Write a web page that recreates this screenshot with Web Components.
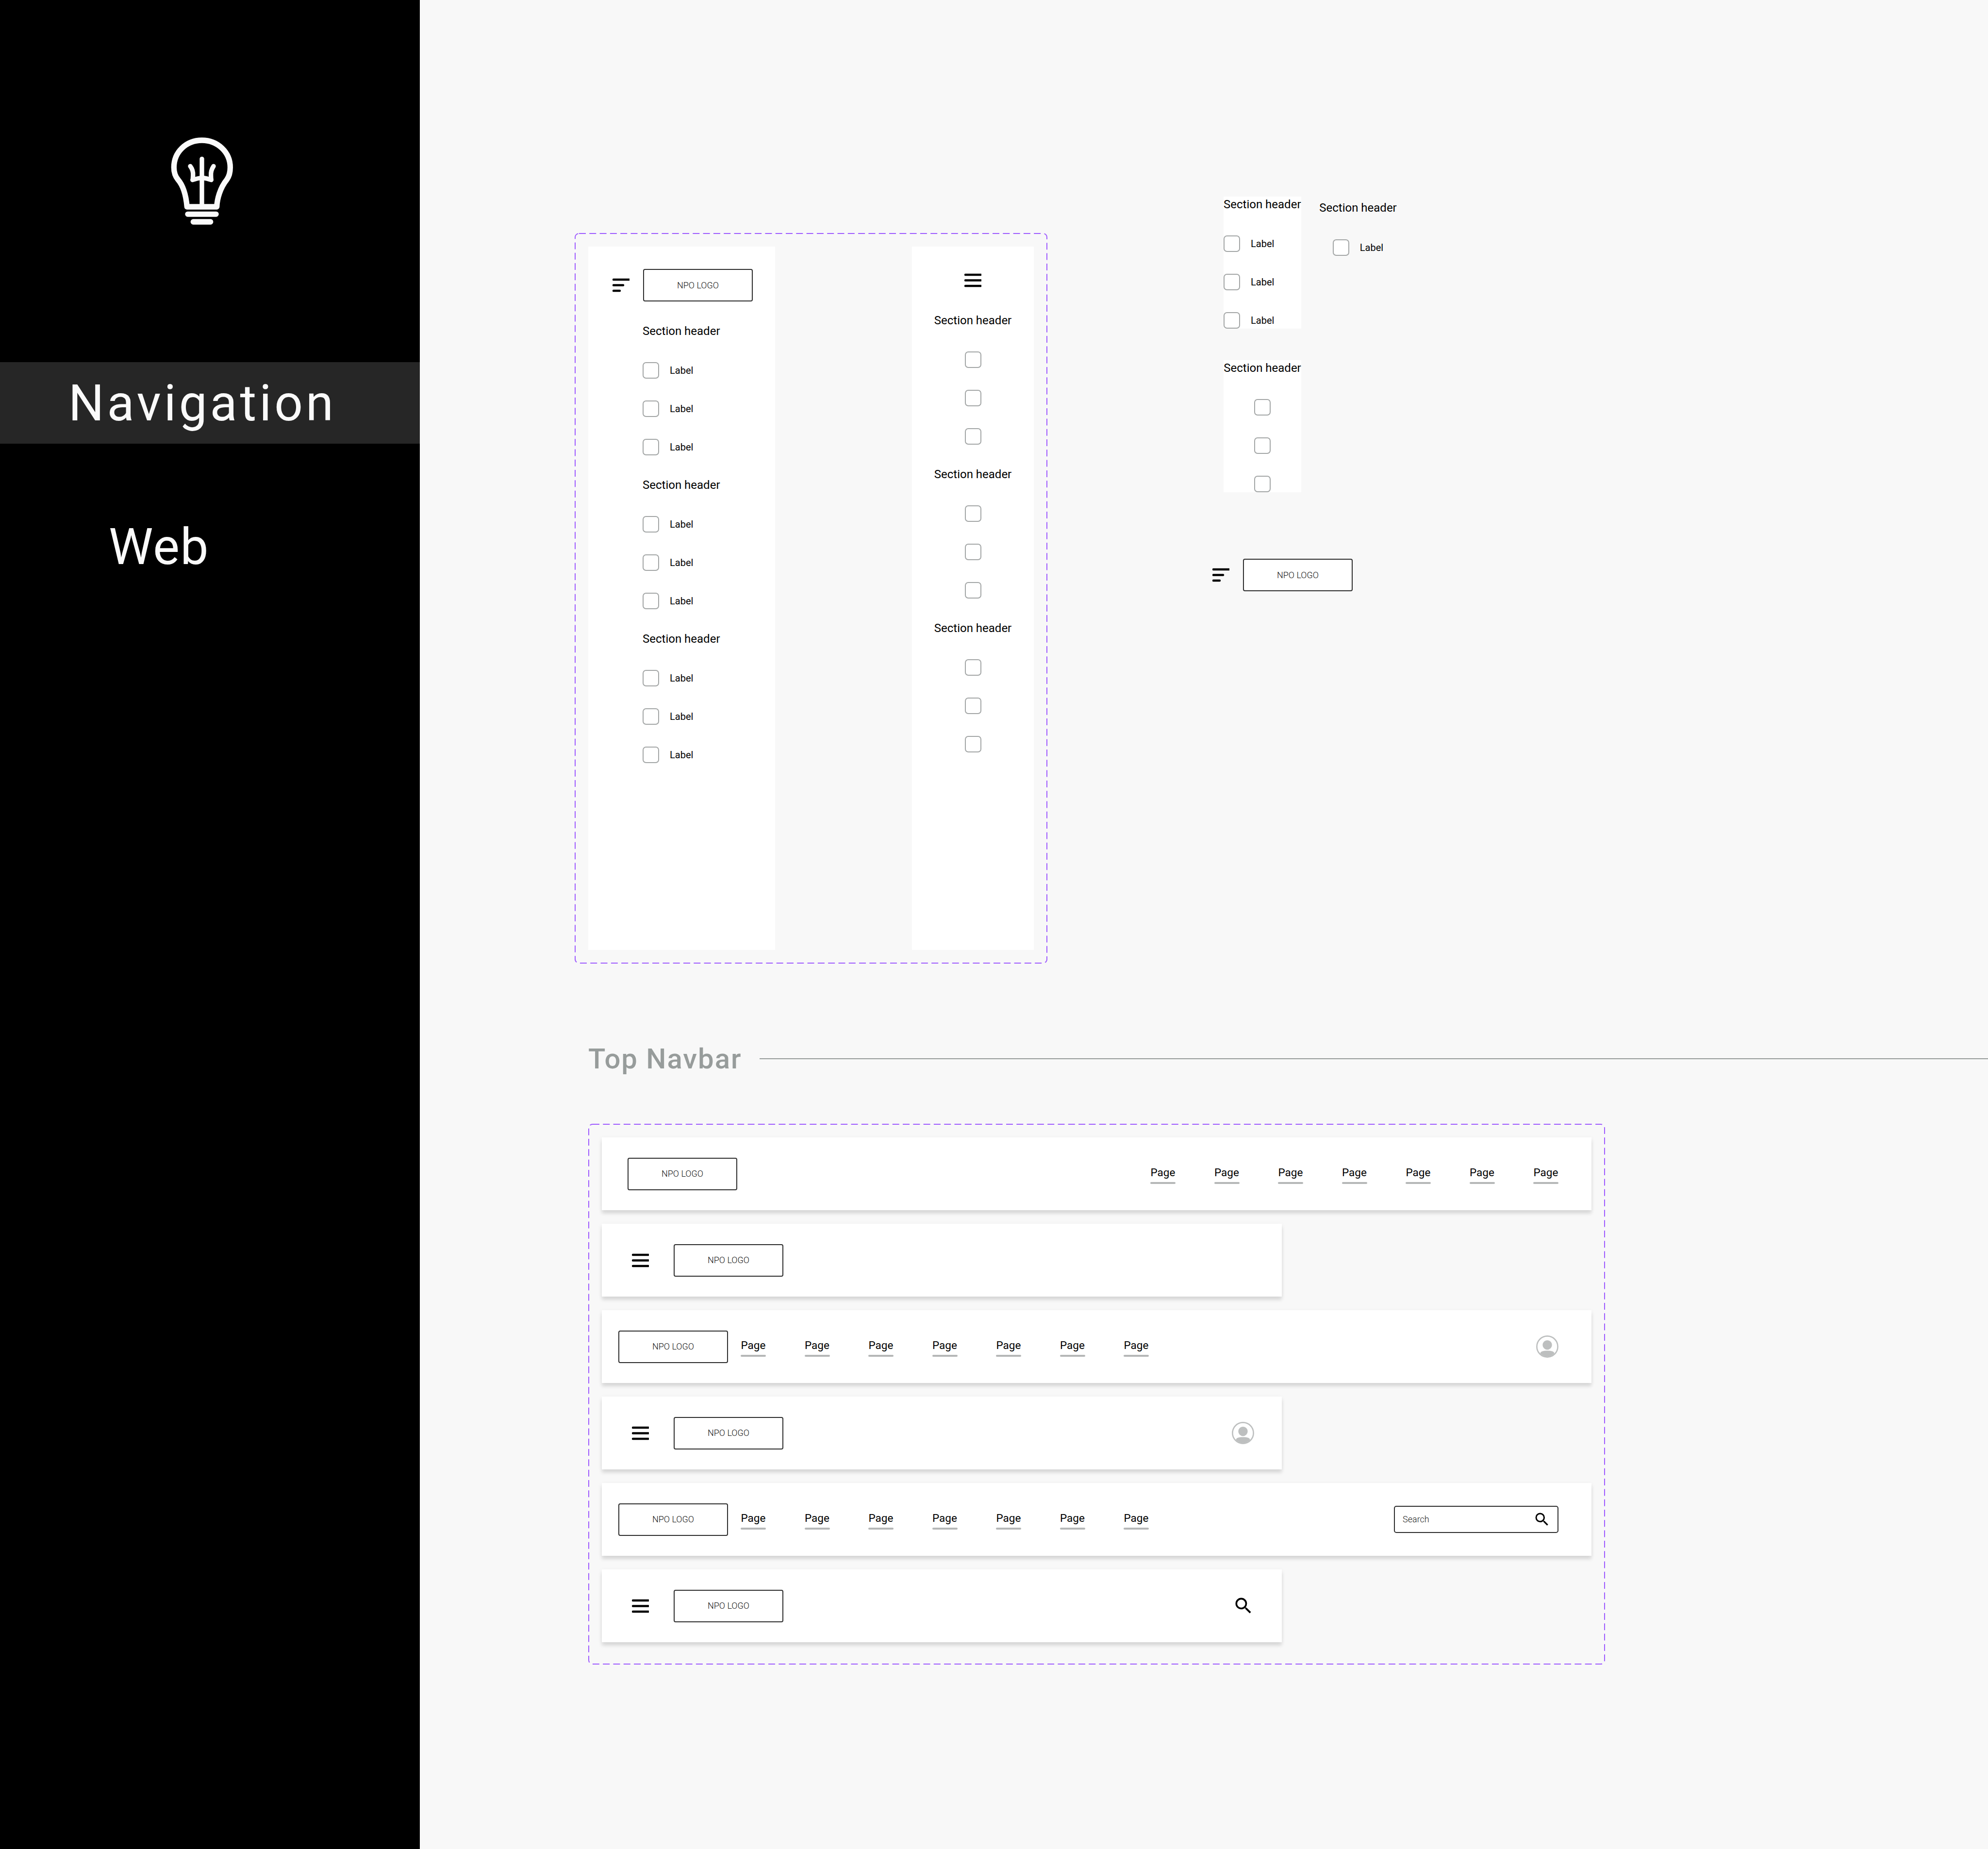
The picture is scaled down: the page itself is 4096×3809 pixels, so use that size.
<!DOCTYPE html>
<html lang="en">
<head>
<meta charset="utf-8">
<title>Navigation</title>
<style>
    html, body { margin: 0; padding: 0; }
    body {
        width: 4096px;
        height: 3809px;
        overflow: hidden;
        display: flex;
        background: #f8f8f8;
        font-family: Roboto, "Liberation Sans", sans-serif;
    }
</style>
</head>
<body>
<app-rail title-text="Navigation" sub-text="Web"></app-rail>
<board-area>
    <div slot="upper">
        <dash-frame style="width:974px;height:1505px;margin-top:75px">
            <div style="display:flex;justify-content:space-between;height:100%">
                <side-panel wide></side-panel>
                <side-panel></side-panel>
            </div>
        </dash-frame>
    </div>
    <loose-parts slot="parts"></loose-parts>
    <section-title slot="title">Top Navbar</section-title>
    <dash-frame slot="navbars" style="width:2095px;height:1114px">
        <div style="display:flex;flex-direction:column;align-items:flex-start;gap:28px">
            <top-bar pad="53">
                <npo-logo slot="start"></npo-logo>
                <page-links slot="end"></page-links>
            </top-bar>
            <top-bar half>
                <menu-icon slot="start" kind="bars"></menu-icon>
                <npo-logo slot="start"></npo-logo>
            </top-bar>
            <top-bar pad="34">
                <npo-logo slot="start"></npo-logo>
                <page-links slot="start"></page-links>
                <user-avatar slot="end"></user-avatar>
            </top-bar>
            <top-bar half>
                <menu-icon slot="start" kind="bars"></menu-icon>
                <npo-logo slot="start"></npo-logo>
                <user-avatar slot="end"></user-avatar>
            </top-bar>
            <top-bar pad="34">
                <npo-logo slot="start"></npo-logo>
                <page-links slot="start"></page-links>
                <search-box slot="end"></search-box>
            </top-bar>
            <top-bar half>
                <menu-icon slot="start" kind="bars"></menu-icon>
                <npo-logo slot="start"></npo-logo>
                <search-icon slot="end" size="44"></search-icon>
            </top-bar>
        </div>
    </dash-frame>
</board-area>

<script>
const FONT = 'Roboto, "Liberation Sans", sans-serif';

class AppRail extends HTMLElement {
    connectedCallback() {
        this.attachShadow({ mode: "open" }).innerHTML = `
            <style>
                :host {
                    display: block;
                    flex: none;
                    width: 865px;
                    height: 3809px;
                    background: #000;
                    color: #fafafa;
                    font: 400 103px/1 ${FONT};
                }
                svg { display: block; margin: 270px 0 276px 330px; }
                .band {
                    height: 168px;
                    box-sizing: border-box;
                    padding: 33px 0 0 141px;
                    background: #262626;
                    letter-spacing: 6px;
                }
                .sub { padding: 161px 0 0 224px; letter-spacing: 1.5px; }
            </style>
            <svg width="170" height="200" viewBox="0 0 510 600" fill="none" stroke="#fafafa" stroke-linecap="round" stroke-linejoin="round">
                <path stroke-width="34" d="M166 468H350C352 420 370 352 412 300C425 282 433 255 433 225C433 130 355 57 258 57C160 57 85 130 85 225C85 255 95 282 110 300C145 340 160 400 166 468Z"/>
                <path stroke-width="28" d="M258 172V468"/>
                <path stroke-width="28" d="M186 217C200 235 205 250 203 275Q202 298 200 302Q230 292 258 288Q290 292 316 302Q314 290 314 275C312 250 318 235 330 217"/>
                <rect x="154" y="497" width="208" height="33" rx="16" fill="#fafafa" stroke="none"/>
                <rect x="188" y="544" width="140" height="34" rx="16" fill="#fafafa" stroke="none"/>
            </svg>
            <div class="band">${this.getAttribute("title-text")}</div>
            <div class="sub">${this.getAttribute("sub-text")}</div>
        `;
    }
}

class BoardArea extends HTMLElement {
    connectedCallback() {
        this.attachShadow({ mode: "open" }).innerHTML = `
            <style>
                :host { display: block; flex: 1; min-width: 0; }
                .top { display: flex; align-items: flex-start; padding: 405px 0 0 319px; gap: 340px; height: 1985px; box-sizing: border-box; }
                .titled { padding-top: 164px; }
                .nav { padding: 102px 0 0 347px; }
            </style>
            <div class="top"><slot name="upper"></slot><slot name="parts"></slot></div>
            <div class="titled"><slot name="title"></slot></div>
            <div class="nav"><slot name="navbars"></slot></div>
        `;
    }
}

class DashFrame extends HTMLElement {
    connectedCallback() {
        this.attachShadow({ mode: "open" }).innerHTML = `
            <style>
                :host { display: block; position: relative; box-sizing: border-box; padding: 28px; }
                svg { position: absolute; inset: 0; width: 100%; height: 100%; pointer-events: none; }
                rect {
                    x: 1px; y: 1px;
                    width: calc(100% - 2px); height: calc(100% - 2px);
                    rx: 8px;
                    fill: none;
                    stroke: #9f5cff;
                    stroke-width: 2;
                    stroke-dasharray: 14 7.3;
                }
            </style>
            <svg><rect></rect></svg>
            <slot></slot>
        `;
    }
}

class NpoLogo extends HTMLElement {
    connectedCallback() {
        this.attachShadow({ mode: "open" }).innerHTML = `
            <style>
                :host {
                    display: flex;
                    flex: none;
                    align-items: center;
                    justify-content: center;
                    box-sizing: border-box;
                    width: 226px;
                    height: 67px;
                    background: #fff;
                    border: 2px solid #2e2e2e;
                    border-radius: 4px;
                    font: 300 18px/1 ${FONT};
                    color: #111;
                }
            </style>
            NPO LOGO
        `;
    }
}

class MenuIcon extends HTMLElement {
    connectedCallback() {
        const isFilter = this.getAttribute("kind") === "filter";
        const widths = isFilter ? [33, 20, 13] : [32, 32, 32];
        const lines = widths.map((w, i) =>
            `<line x1="2" x2="${2 + w}" y1="${3 + i * 11.5}" y2="${3 + i * 11.5}"/>`).join("");
        this.attachShadow({ mode: "open" }).innerHTML = `
            <style>
                :host { display: block; flex: none; width: 35px; height: 29px; }
                svg { display: block; }
            </style>
            <svg width="35" height="29" stroke="#000" stroke-width="4.4" stroke-linecap="round">${lines}</svg>
        `;
    }
}

class NavSection extends HTMLElement {
    connectedCallback() {
        const labelled = this.hasAttribute("labels");
        const row = labelled ? `<div class="row"><span class="box"></span><span class="label">Label</span></div>`
            : `<div class="row"><span class="box"></span></div>`;
        this.attachShadow({ mode: "open" }).innerHTML = `
            <style>
                :host {
                    display: flex;
                    flex-direction: column;
                    width: 160px;
                    align-items: ${this.hasAttribute("center") ? "center" : "flex-start"};
                    font: 400 24px/28px ${FONT};
                    color: #000;
                    white-space: nowrap;
                    --head-gap: 50px;
                }
                .head { margin-bottom: var(--head-gap); }
                .rows { display: flex; flex-direction: column; gap: 45px; }
                .row { display: flex; align-items: center; gap: 22px; height: 34px; }
                .box {
                    box-sizing: border-box;
                    width: 34px;
                    height: 34px;
                    background: #fff;
                    border: 2px solid #a3a6a6;
                    border-radius: 7px;
                }
                .label { font-size: 20px; line-height: 24px; }
            </style>
            <div class="head">Section header</div>
            <div class="rows">${row.repeat(this.repeatCount())}</div>
        `;
    }
    repeatCount() {
        return Number(this.getAttribute("count") || 3);
    }
}

class SidePanel extends HTMLElement {
    connectedCallback() {
        const wide = this.hasAttribute("wide");
        const sections = (wide ? `<nav-section labels></nav-section>` : `<nav-section center></nav-section>`).repeat(3);
        this.attachShadow({ mode: "open" }).innerHTML = `
            <style>
                :host {
                    display: block;
                    box-sizing: border-box;
                    width: ${wide ? 385 : 251}px;
                    height: 100%;
                    background: #fff;
                    padding-top: ${wide ? 46 : 55}px;
                }
                .head { display: flex; align-items: center; justify-content: center; gap: 28px; }
                .wide .head { justify-content: flex-start; padding-left: 50px; }
                .list { display: flex; flex-direction: column; gap: 47px; align-items: center; margin-top: 54px; }
                .wide .list { align-items: flex-start; padding-left: 112px; margin-top: 47px; }
            </style>
            <div class="${wide ? "wide" : ""}">
                <div class="head">
                    <menu-icon kind="${wide ? "filter" : "bars"}"></menu-icon>
                    ${wide ? "<npo-logo></npo-logo>" : ""}
                </div>
                <div class="list">${sections}</div>
            </div>
        `;
    }
}

class LooseParts extends HTMLElement {
    connectedCallback() {
        this.attachShadow({ mode: "open" }).innerHTML = `
            <style>
                :host { display: block; }
                .cols { display: flex; align-items: flex-start; }
                .stack { display: flex; flex-direction: column; gap: 65px; margin-left: 23px; }
                .white { background: #fff; padding-top: 2px; --head-gap: 50px; }
                .single { margin: 9px 0 0 37px; --head-gap: 51px; }
                .head { display: flex; align-items: center; gap: 28px; margin-top: 137px; }
            </style>
            <div class="cols">
                <div class="stack">
                    <nav-section class="white" labels></nav-section>
                    <nav-section class="white" center></nav-section>
                </div>
                <nav-section class="single" labels center count="1"></nav-section>
            </div>
            <div class="head">
                <menu-icon kind="filter"></menu-icon>
                <npo-logo></npo-logo>
            </div>
        `;
    }
}

class SectionTitle extends HTMLElement {
    connectedCallback() {
        this.attachShadow({ mode: "open" }).innerHTML = `
            <style>
                :host {
                    display: flex;
                    align-items: center;
                    gap: 37px;
                    margin-left: 347px;
                    font: 500 58px/64px ${FONT};
                    letter-spacing: 2px;
                    color: #979c9b;
                    white-space: nowrap;
                }
                i { flex: 1; height: 2.5px; background: #979c9b; }
            </style>
            <slot></slot><i></i>
        `;
    }
}

class TopBar extends HTMLElement {
    connectedCallback() {
        const half = this.hasAttribute("half");
        const pad = this.getAttribute("pad") || 62;
        const startGap = half ? 51 : 26;
        const endPad = half ? 57 : 68;
        this.attachShadow({ mode: "open" }).innerHTML = `
            <style>
                :host {
                    display: flex;
                    align-items: center;
                    justify-content: space-between;
                    box-sizing: border-box;
                    flex: none;
                    width: ${half ? 1401 : 2039}px;
                    height: 150px;
                    padding: 0 ${endPad}px 0 ${pad}px;
                    background: #fff;
                    box-shadow: 0 7px 7px rgba(0, 0, 0, 0.11), 0 2px 10px rgba(0, 0, 0, 0.05);
                }
                .start { display: flex; align-items: center; gap: ${startGap}px; }
            </style>
            <div class="start"><slot name="start"></slot></div>
            <slot name="end"></slot>
        `;
    }
}

class PageLinks extends HTMLElement {
    connectedCallback() {
        const one = `<div class="link"><span>Page</span><i></i></div>`;
        this.attachShadow({ mode: "open" }).innerHTML = `
            <style>
                :host { display: flex; gap: 79.5px; font: 400 22.5px/26px ${FONT}; color: #000; }
                .link { display: flex; flex-direction: column; align-items: center; width: 52px; padding-top: 5px; }
                i { display: block; width: 52px; height: 4px; margin-top: 7px; border-radius: 2px; background: #b5b7b7; }
            </style>
            ${one.repeat(7)}
        `;
    }
}

class UserAvatar extends HTMLElement {
    connectedCallback() {
        this.attachShadow({ mode: "open" }).innerHTML = `
            <style>
                :host { display: block; flex: none; width: 46px; height: 46px; }
                svg { display: block; }
            </style>
            <svg width="46" height="46" viewBox="0 0 46 46" fill="#bdbfbf">
                <circle cx="23" cy="23" r="21.6" fill="none" stroke="#bdbfbf" stroke-width="2.6"/>
                <circle cx="23" cy="19.7" r="9.7"/>
                <path d="M8.5 37C9 33 14 31.5 23 31.5C32 31.5 37 33 37.5 37C34 41 29 43.5 23 43.5C17 43.5 12 41 8.5 37Z"/>
            </svg>
        `;
    }
}

class SearchIcon extends HTMLElement {
    connectedCallback() {
        const size = this.getAttribute("size") || 36;
        this.attachShadow({ mode: "open" }).innerHTML = `
            <style>
                :host { display: block; flex: none; width: ${size}px; height: ${size}px; }
                svg { display: block; }
            </style>
            <svg width="${size}" height="${size}" viewBox="0 0 24 24" fill="#000">
                <path d="M15.5 14h-.79l-.28-.27A6.471 6.471 0 0 0 16 9.5 6.5 6.5 0 1 0 9.5 16c1.61 0 3.09-.59 4.23-1.57l.27.28v.79l5 4.99L20.49 19l-4.99-5zm-6 0C7.01 14 5 11.99 5 9.5S7.01 5 9.5 5 14 7.01 14 9.5 11.99 14 9.5 14z"/>
            </svg>
        `;
    }
}

class SearchBox extends HTMLElement {
    connectedCallback() {
        this.attachShadow({ mode: "open" }).innerHTML = `
            <style>
                :host {
                    display: flex;
                    align-items: center;
                    justify-content: space-between;
                    box-sizing: border-box;
                    width: 339px;
                    height: 56px;
                    padding: 0 14px 0 16px;
                    background: #fff;
                    border: 2px solid #2e2e2e;
                    border-radius: 5px;
                    font: 300 18px/1 ${FONT};
                    color: #222;
                }
            </style>
            Search
            <search-icon size="36"></search-icon>
        `;
    }
}

customElements.define("app-rail", AppRail);
customElements.define("board-area", BoardArea);
customElements.define("dash-frame", DashFrame);
customElements.define("npo-logo", NpoLogo);
customElements.define("menu-icon", MenuIcon);
customElements.define("nav-section", NavSection);
customElements.define("side-panel", SidePanel);
customElements.define("loose-parts", LooseParts);
customElements.define("section-title", SectionTitle);
customElements.define("top-bar", TopBar);
customElements.define("page-links", PageLinks);
customElements.define("user-avatar", UserAvatar);
customElements.define("search-icon", SearchIcon);
customElements.define("search-box", SearchBox);
</script>
</body>
</html>
